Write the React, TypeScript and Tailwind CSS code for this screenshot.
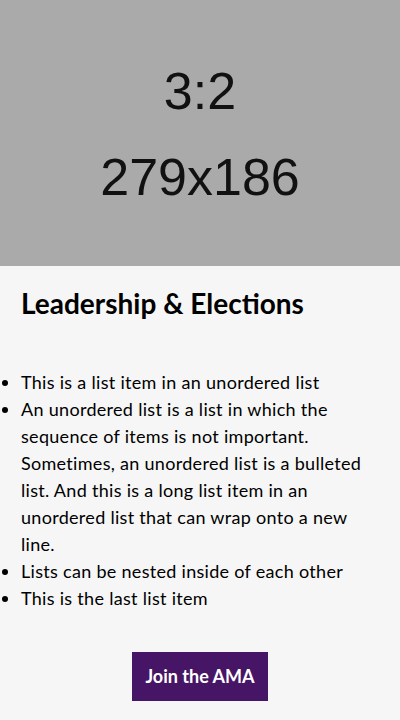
import React from 'react';

const items = [
    'This is a list item in an unordered list',
    'An unordered list is a list in which the sequence of items is not important. Sometimes, an unordered list is a bulleted list. And this is a long list item in an unordered list that can wrap onto a new line.',
    'Lists can be nested inside of each other',
    'This is the last list item',
];

const App: React.FC = () => {
    return (
        <div className="min-h-[720px] w-[400px] bg-[#f6f6f6] font-['Lato',sans-serif] text-black">
            <div className="flex h-[266px] flex-col items-center justify-center gap-[34px] bg-[#aaaaaa] pt-[2px] font-['Liberation_Sans',Arial,sans-serif] text-[52px] leading-[52px] text-[#111]">
                <span>3:2</span>
                <span>279x186</span>
            </div>

            <div className="px-[21px] pt-[21px]">
                <h2 className="text-[28px] font-bold leading-[32px]">Leadership &amp; Elections</h2>
            </div>

            <ul className="mt-[50px] list-disc pl-[21px] pr-[20px] text-[18px] leading-[27px] tracking-[0.3px]">
                {items.map((item) => (
                    <li key={item}>{item}</li>
                ))}
            </ul>

            <div className="flex justify-center pt-[40px] pb-[20px]">
                <button className="h-[49px] w-[136px] bg-[#461565] text-[18px] font-bold text-white">
                    Join the AMA
                </button>
            </div>
        </div>
    );
};

export default App;
